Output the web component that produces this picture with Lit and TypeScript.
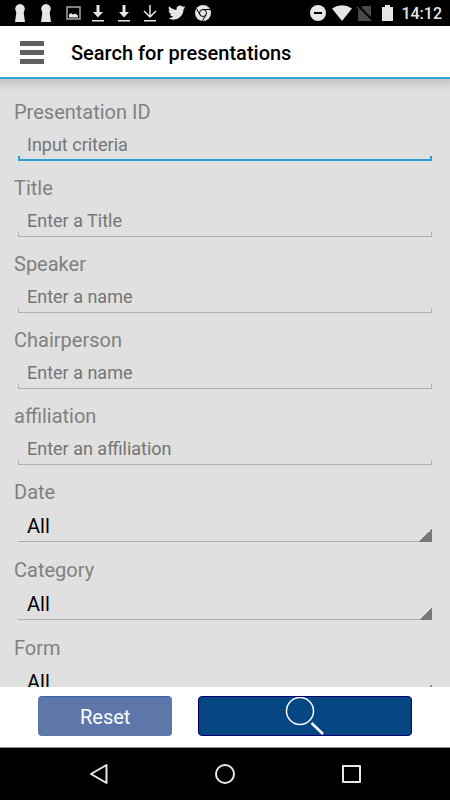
import { LitElement, html, css, svg } from "lit";
import { customElement, state } from "lit/decorators.js";
import { classMap } from "lit/directives/class-map.js";

interface TextField {
  id: string;
  label: string;
  placeholder: string;
}

const TEXT_FIELDS: TextField[] = [
  { id: "presentation-id", label: "Presentation ID", placeholder: "Input criteria" },
  { id: "title", label: "Title", placeholder: "Enter a Title" },
  { id: "speaker", label: "Speaker", placeholder: "Enter a name" },
  { id: "chairperson", label: "Chairperson", placeholder: "Enter a name" },
  { id: "affiliation", label: "affiliation", placeholder: "Enter an affiliation" },
];

const SELECT_FIELDS = [
  { id: "date", label: "Date" },
  { id: "category", label: "Category" },
  { id: "form", label: "Form" },
];

const keyhole = svg`<path d="M10 4a4.800 4.800 0 0 1 4 7.500l-.3 1.500L15 22H5l1.300-9-.3-1.500A4.800 4.800 0 0 1 10 4z"/>`;
const thinArrow = svg`<path d="M10 5v12M4 11l6 6 6-6" fill="none" stroke="#e6e6e6" stroke-width="1.500"/><path d="M4 20h12v1.500H4z"/>`;
const boldArrow = svg`<path d="M8.500 5h3v7H15l-5 5.500L5 12h3.500z"/><path d="M4 20h12v1.500H4z"/>`;

@customElement("status-bar")
export class StatusBar extends LitElement {
  static styles = css`
    :host {
      display: flex;
      justify-content: space-between;
      align-items: center;
      height: 26px;
      padding: 0 8px 0 10px;
      background: #000;
      color: #e6e6e6;
      font: 500 16px/26px Roboto, sans-serif;
    }
    .group {
      display: flex;
      align-items: center;
    }
    .left {
      gap: 6px;
    }
    .right {
      gap: 3px;
    }
    svg {
      display: block;
      width: 20px;
      height: 26px;
      fill: #e6e6e6;
    }
    .time {
      padding-top: 2px;
    }
  `;

  render() {
    return html`
      <div class="group left">
        <svg viewBox="0 0 20 26">${keyhole}</svg>
        <svg viewBox="0 0 20 26">${keyhole}</svg>
        <svg viewBox="0 0 20 26">
          <rect x="5" y="7" width="13" height="12" fill="none" stroke="#a8a8a8" stroke-width="1.500" />
          <path d="M7 17.500v-3l2-1.500 2 1.500 2-1 3 2v2z" />
        </svg>
        <svg viewBox="0 0 20 26">${boldArrow}</svg>
        <svg viewBox="0 0 20 26">${boldArrow}</svg>
        <svg viewBox="0 0 20 26">${thinArrow}</svg>
        <svg viewBox="0 0 20 26">
          <g transform="translate(2 4) scale(.72)">
            <path
              d="M23.950 4.570a10 10 0 0 1-2.820.770 4.960 4.960 0 0 0 2.160-2.720c-.950.550-2 .950-3.130 1.180a4.920 4.920 0 0 0-8.380 4.480C7.690 8.090 4.070 6.130 1.640 3.160a4.820 4.820 0 0 0-.670 2.480c0 1.710.870 3.210 2.190 4.100a4.900 4.900 0 0 1-2.230-.620v.060a4.920 4.920 0 0 0 3.950 4.830 5 5 0 0 1-2.210.080 4.940 4.940 0 0 0 4.600 3.420A9.870 9.870 0 0 1 0 19.540a14 14 0 0 0 7.550 2.210c9.050 0 14-7.500 14-13.980 0-.210 0-.420-.020-.630a9.940 9.940 0 0 0 2.460-2.550z"
            />
          </g>
        </svg>
        <svg viewBox="0 0 20 26">
          <circle cx="11" cy="13" r="8" />
          <g fill="none" stroke="#000" stroke-width="1">
            <circle cx="11" cy="13" r="3.500" />
            <path d="M11 9.500h7M8 14.750L4.500 8.700M14 14.750L10.500 20.800" />
          </g>
        </svg>
      </div>
      <div class="group right">
        <svg viewBox="0 0 20 26">
          <circle cx="9" cy="13" r="8" />
          <path d="M5 12h8v2H5z" fill="#000" />
        </svg>
        <svg viewBox="0 0 20 26"><path d="M0 8.500Q10 2 20 8.500L10 21z" /></svg>
        <svg viewBox="0 0 20 26">
          <path d="M8 6h8v15H3V11z" fill="#4a4a4a" />
          <path d="M3 6l15 15" stroke="#000" stroke-width="2.500" />
          <path d="M2 7l14 14" stroke="#4a4a4a" stroke-width="1.500" />
        </svg>
        <svg viewBox="0 0 20 26"><path d="M7 5h5v2h3v14H4V7h3z" /></svg>
        <span class="time">14:12</span>
      </div>
    `;
  }
}

@customElement("nav-bar")
export class NavBar extends LitElement {
  static styles = css`
    :host {
      display: flex;
      justify-content: center;
      gap: 94px;
      padding: 10px 0;
      background: #000;
      border-top: 1px solid #8a8f8a;
    }
    button {
      display: block;
      padding: 0;
      border: 0;
      background: none;
    }
    svg {
      display: block;
      width: 32px;
      height: 32px;
      fill: none;
      stroke: #e8e8e8;
      stroke-width: 2;
      stroke-linejoin: round;
    }
  `;

  render() {
    return html`
      <button aria-label="Back"><svg viewBox="0 0 32 32"><path d="M8 16l15.500-9v18z" /></svg></button>
      <button aria-label="Home"><svg viewBox="0 0 32 32"><circle cx="16" cy="16" r="9" /></svg></button>
      <button aria-label="Recent apps"><svg viewBox="0 0 32 32"><rect x="8" y="8" width="17" height="16" /></svg></button>
    `;
  }
}

@customElement("app-root")
export class AppRoot extends LitElement {
  @state() private active = "presentation-id";

  static styles = css`
    :host {
      display: flex;
      flex-direction: column;
      height: 100vh;
      background: #fff;
      font-family: Roboto, sans-serif;
    }
    * {
      box-sizing: border-box;
    }
    .header {
      display: flex;
      align-items: center;
      gap: 27px;
      height: 53px;
      flex: none;
      padding: 2px 20px 0;
      border-bottom: 2px solid #2fa4d6;
    }
    .menu {
      display: grid;
      gap: 4px;
      width: 24px;
      padding: 0;
      border: 0;
      background: none;
    }
    .bar {
      height: 5px;
      background: #606060;
    }
    h1 {
      margin: 0;
      font-size: 20px;
      line-height: 24px;
      font-weight: 500;
      color: #000;
    }
    .form {
      display: flex;
      flex-direction: column;
      gap: 15px;
      flex: 1;
      min-height: 0;
      overflow-y: auto;
      scrollbar-width: none;
      padding: 21px 14px 15px;
      background: linear-gradient(#c6c6c6, #e0e0e0 12px);
    }
    .field {
      display: flex;
      flex-direction: column;
      flex: none;
    }
    label {
      font-size: 20px;
      line-height: 24px;
      color: #808080;
    }
    input,
    select {
      margin: 0 4px;
      padding: 0 9px;
      border: 0;
      border-radius: 0;
      outline: 0;
      appearance: none;
      font-family: inherit;
    }
    input {
      --line: #b0b0b0;
      --weight: 1px;
      height: 37px;
      padding-top: 5px;
      padding-bottom: 1px;
      font-size: 18px;
      color: #000;
      background:
        linear-gradient(var(--line), var(--line)) bottom / 100% var(--weight) no-repeat,
        linear-gradient(var(--line), var(--line)) left bottom / var(--weight) 5px no-repeat,
        linear-gradient(var(--line), var(--line)) right bottom / var(--weight) 5px no-repeat;
    }
    input.active {
      --line: #2a9fd2;
      --weight: 2px;
    }
    input::placeholder {
      color: #757575;
      opacity: 1;
    }
    select {
      height: 38px;
      padding-top: 5px;
      font-size: 20px;
      color: #000;
      background:
        linear-gradient(135deg, transparent 50%, #777 50%) right bottom / 13px 13px no-repeat,
        linear-gradient(#b0b0b0, #b0b0b0) bottom / 100% 1px no-repeat;
    }
    .choice + .choice {
      padding-top: 1px;
    }
    .actions {
      display: flex;
      gap: 26px;
      flex: none;
      padding: 9px 38px 11px;
      background: #fff;
    }
    .action {
      display: flex;
      align-items: center;
      justify-content: center;
      height: 40px;
      padding: 0;
      border: 1px solid;
      border-radius: 4px;
      font: 20px/24px Roboto, sans-serif;
      color: #fff;
    }
    .reset {
      flex: 5 1 0;
      padding-top: 2px;
      background: #5e77ab;
      border-color: #3a66ab #5e77ab #5e77ab;
    }
    .search {
      flex: 8 1 0;
      background: #064683;
      border-color: #000074;
    }
    .lens {
      width: 40px;
      height: 38px;
      fill: none;
      stroke: #fff;
    }
  `;

  render() {
    return html`
      <status-bar></status-bar>
      <header class="header">
        <button class="menu" aria-label="Menu">
          <span class="bar"></span><span class="bar"></span><span class="bar"></span>
        </button>
        <h1>Search for presentations</h1>
      </header>
      <form class="form" id="search-form">
        ${TEXT_FIELDS.map(
          (f) => html`
            <div class="field">
              <label for=${f.id}>${f.label}</label>
              <input
                id=${f.id}
                type="text"
                placeholder=${f.placeholder}
                class=${classMap({ active: this.active === f.id })}
                @focus=${() => (this.active = f.id)}
              />
            </div>
          `
        )}
        ${SELECT_FIELDS.map(
          (f) => html`
            <div class="field choice">
              <label for=${f.id}>${f.label}</label>
              <select id=${f.id}>
                <option>All</option>
              </select>
            </div>
          `
        )}
      </form>
      <div class="actions">
        <button class="action reset" type="reset" form="search-form">Reset</button>
        <button class="action search" type="button" aria-label="Search">
          <svg class="lens" viewBox="0 0 40 38">
            <circle cx="15" cy="14" r="13.500" stroke-width="1.500" />
            <path d="M26.500 26L38 37" stroke-width="2.500" />
          </svg>
        </button>
      </div>
      <nav-bar></nav-bar>
    `;
  }
}
